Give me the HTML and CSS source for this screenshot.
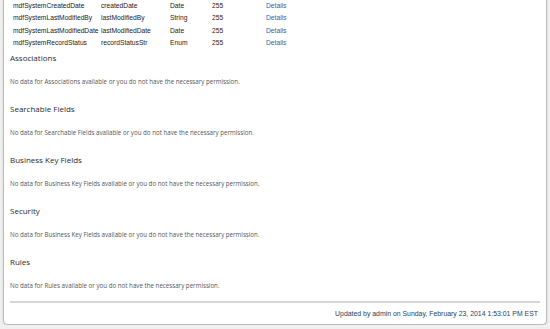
FILE: index.html
```html
<!DOCTYPE html>
<html lang="en">
<head>
    <meta charset="UTF-8">
    <title>Object Definition</title>
    <link rel="stylesheet" href="styles.css">
</head>
<body>
    <div class="panel">
        <table class="fields">
            <tr>
                <td class="c-name">mdfSystemCreatedDate</td>
                <td class="c-id">createdDate</td>
                <td class="c-type">Date</td>
                <td class="c-len">255</td>
                <td><a href="#">Details</a></td>
            </tr>
            <tr>
                <td class="c-name">mdfSystemLastModifiedBy</td>
                <td class="c-id">lastModifiedBy</td>
                <td class="c-type">String</td>
                <td class="c-len">255</td>
                <td><a href="#">Details</a></td>
            </tr>
            <tr>
                <td class="c-name">mdfSystemLastModifiedDate</td>
                <td class="c-id">lastModifiedDate</td>
                <td class="c-type">Date</td>
                <td class="c-len">255</td>
                <td><a href="#">Details</a></td>
            </tr>
            <tr>
                <td class="c-name">mdfSystemRecordStatus</td>
                <td class="c-id">recordStatusStr</td>
                <td class="c-type">Enum</td>
                <td class="c-len">255</td>
                <td><a href="#">Details</a></td>
            </tr>
        </table>

        <div class="sections">
            <div class="section">
                <h3>Associations</h3>
                <p>No data for Associations available or you do not have the necessary permission.</p>
            </div>
            <div class="section">
                <h3>Searchable Fields</h3>
                <p>No data for Searchable Fields available or you do not have the necessary permission.</p>
            </div>
            <div class="section">
                <h3>Business Key Fields</h3>
                <p>No data for Business Key Fields available or you do not have the necessary permission.</p>
            </div>
            <div class="section">
                <h3>Security</h3>
                <p>No data for Business Key Fields available or you do not have the necessary permission.</p>
            </div>
            <div class="section">
                <h3>Rules</h3>
                <p>No data for Rules available or you do not have the necessary permission.</p>
            </div>
        </div>

        <div class="footer">Updated by admin on Sunday, February 23, 2014 1:53:01 PM EST</div>
    </div>
</body>
</html>
```

FILE: styles.css
```css
body {
    margin: 0;
    padding: 0 3px;
    background: #f0f0f0;
    font-family: "Liberation Sans", Arial, sans-serif;
}
.panel {
    box-sizing: border-box;
    background: #fff;
    border: 1px solid #b9bcc0;
    border-top: none;
    border-radius: 0 0 5px 5px;
    box-shadow: 0 1px 2px rgba(0, 0, 0, 0.15);
    padding: 0 6px 5px 6px;
}
.fields {
    border-collapse: collapse;
    font-size: 6.7px;
    color: #222;
    margin: -1.25px 0 0 3px;
}
.fields td {
    height: 12.5px;
    padding: 0;
    vertical-align: middle;
    white-space: nowrap;
}
.c-name { width: 88px; }
.c-id { width: 69px; }
.c-type { width: 42px; }
.c-len { width: 54px; }
.fields a {
    color: #2b64a8;
    text-decoration: none;
}
.sections {
    margin-top: 3.25px;
}
.section + .section {
    margin-top: 16px;
}
.section h3 {
    margin: 0;
    font-family: "Open Sans", sans-serif;
    font-weight: normal;
    font-size: 8px;
    color: #2a2a2a;
    line-height: 12px;
}
.section p {
    margin: 13px 0 0 0;
    font-family: "Open Sans", sans-serif;
    font-size: 6.2px;
    color: #555;
    line-height: 10px;
}
.footer {
    margin-top: 10px;
    border-top: 2px solid #d6d6d6;
    padding: 6px 2px 0 0;
    text-align: right;
    font-size: 6.9px;
    line-height: 10px;
    color: #2c3e55;
}
```
